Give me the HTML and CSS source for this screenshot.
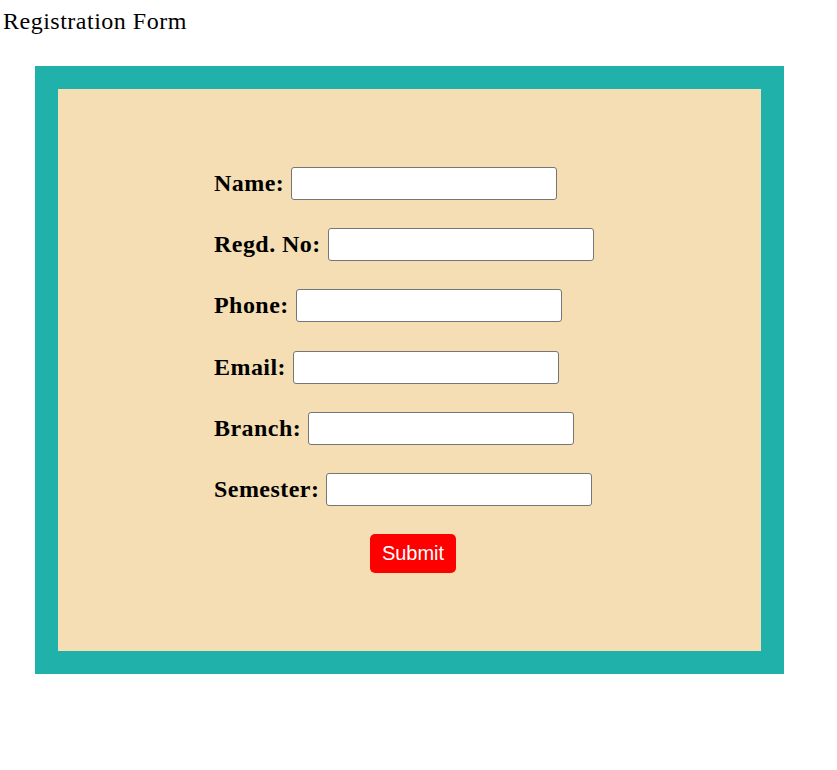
FILE: index.html
```html
<!DOCTYPE html>
<html>
<head>
<meta charset="utf-8">
<title>Registration Form</title>
<link rel="stylesheet" href="styles.css">
</head>
<body>
<div class="title">Registration Form</div>
<div class="box">
  <form class="form">
    <div class="row"><label class="label">Name:</label><input class="field" type="text"></div>
    <div class="row"><label class="label">Regd. No:</label><input class="field" type="text"></div>
    <div class="row"><label class="label">Phone:</label><input class="field" type="text"></div>
    <div class="row"><label class="label">Email:</label><input class="field" type="text"></div>
    <div class="row"><label class="label">Branch:</label><input class="field" type="text"></div>
    <div class="row"><label class="label">Semester:</label><input class="field" type="text"></div>
    <button class="submit" type="button">Submit</button>
  </form>
</div>
</body>
</html>
```
FILE: styles.css
```css
html, body {
  margin: 0;
  padding: 0;
  background: #ffffff;
}
body {
  font-family: "Liberation Serif", "Times New Roman", serif;
  color: #000;
}
.title {
  font-size: 24px;
  line-height: 27px;
  letter-spacing: 0.5px;
  padding: 8px 0 0 3px;
}
.box {
  margin: 31px 0 0 35px;
  width: 703px;
  height: 562px;
  border: 23px solid #20b2aa;
  background: #f5deb3;
  box-sizing: content-box;
  padding: 0;
}
.form {
  margin: 0;
  padding: 78px 0 0 156px;
  width: 398px;
  display: flex;
  flex-direction: column;
  gap: 28.2px;
}
.row {
  display: flex;
  align-items: center;
  gap: 7px;
  height: 33px;
}
.label {
  font-size: 24px;
  font-weight: bold;
  line-height: 27px;
  letter-spacing: 0.45px;
}
.field {
  width: 266px;
  height: 33px;
  box-sizing: border-box;
  margin: 0;
  border: 1px solid #767676;
  border-radius: 3px;
  background: #fff;
  padding: 1px 2px;
}
.submit {
  align-self: center;
  width: 86px;
  height: 39px;
  box-sizing: border-box;
  margin: 0;
  border: none;
  border-radius: 5px;
  background: #ff0000;
  color: #fff;
  font-family: "Liberation Sans", Arial, sans-serif;
  font-size: 20px;
  line-height: 23px;
  padding: 0;
  cursor: pointer;
}
```
